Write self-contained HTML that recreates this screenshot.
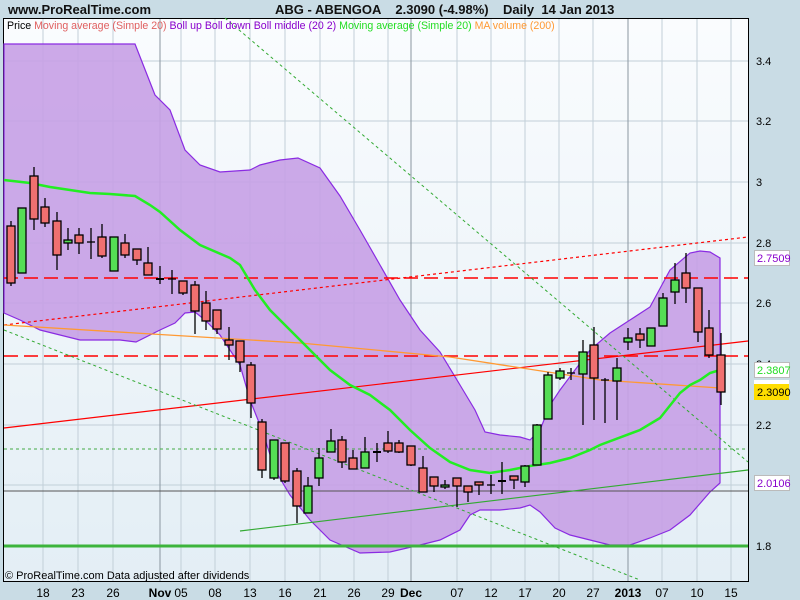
<!DOCTYPE html>
<html><head><meta charset="utf-8"><style>
html,body{margin:0;padding:0;width:800px;height:600px;overflow:hidden;background:#c9dce5;font-family:"Liberation Sans",sans-serif}
</style></head><body>
<svg width="800" height="600" viewBox="0 0 800 600" xmlns="http://www.w3.org/2000/svg" font-family="Liberation Sans, sans-serif">
<defs><linearGradient id="bg" x1="0" y1="0" x2="0" y2="1"><stop offset="0" stop-color="#fafcfe"/><stop offset="1" stop-color="#e3eef5"/></linearGradient></defs>
<rect x="0" y="0" width="800" height="600" fill="#c9dce5"/>
<text x="8" y="14" font-size="13" font-weight="bold" fill="#111">www.ProRealTime.com</text>
<text x="275" y="14" font-size="13" font-weight="bold" fill="#111" xml:space="preserve">ABG - ABENGOA    2.3090 (-4.98%)    Daily  14 Jan 2013</text>
<rect x="3.5" y="18.5" width="745" height="563" fill="url(#bg)" stroke="#000"/>
<g stroke="#c2cfd8" stroke-width="1">
<line x1="4" x2="748" y1="61" y2="61"/><line x1="4" x2="748" y1="121" y2="121"/><line x1="4" x2="748" y1="182" y2="182"/><line x1="4" x2="748" y1="243" y2="243"/><line x1="4" x2="748" y1="303" y2="303"/><line x1="4" x2="748" y1="364" y2="364"/><line x1="4" x2="748" y1="425" y2="425"/><line x1="4" x2="748" y1="485" y2="485"/>
<line x1="43" x2="43" y1="19" y2="581"/><line x1="78" x2="78" y1="19" y2="581"/><line x1="113" x2="113" y1="19" y2="581"/><line x1="181" x2="181" y1="19" y2="581"/><line x1="215" x2="215" y1="19" y2="581"/><line x1="250" x2="250" y1="19" y2="581"/><line x1="285" x2="285" y1="19" y2="581"/><line x1="320" x2="320" y1="19" y2="581"/><line x1="354" x2="354" y1="19" y2="581"/><line x1="388" x2="388" y1="19" y2="581"/><line x1="457" x2="457" y1="19" y2="581"/><line x1="491" x2="491" y1="19" y2="581"/><line x1="525" x2="525" y1="19" y2="581"/><line x1="559" x2="559" y1="19" y2="581"/><line x1="593" x2="593" y1="19" y2="581"/><line x1="662" x2="662" y1="19" y2="581"/><line x1="697" x2="697" y1="19" y2="581"/><line x1="731" x2="731" y1="19" y2="581"/>
</g>
<g stroke="#8a96a0"><line x1="160" x2="160" y1="19" y2="581"/><line x1="411" x2="411" y1="19" y2="581"/><line x1="628" x2="628" y1="19" y2="581"/></g>
<polygon fill="#c6a0e6" fill-opacity="0.9" stroke="#8a2be2" stroke-width="1.2" points="4,44 135,44 155,95 170,110 185,150 200,165 220,172 250,170 260,165 280,160 298,158 320,168 340,196 360,230 380,265 400,300 420,330 440,352 460,385 475,410 485,432 500,435 520,437 530,440 540,430 550,405 560,390 575,370 590,350 610,333 630,320 650,307 670,270 690,253 700,251 710,252 720,258 720,483 710,492 690,515 670,530 650,538 630,545 610,545 590,540 570,535 555,528 540,512 530,505 520,508 500,510 480,510 470,515 460,530 440,540 420,545 390,552 360,553 330,540 310,520 290,495 275,470 262,430 250,400 240,365 220,335 205,320 195,312 185,313 175,323 160,330 136,342 120,340 80,340 40,330 20,320 4,313"/>
<line x1="4" x2="748" y1="278" y2="278" stroke="#ff0000" stroke-width="1.5" stroke-dasharray="14,6"/>
<line x1="4" x2="748" y1="356" y2="356" stroke="#ff0000" stroke-width="1.5" stroke-dasharray="14,6"/>
<line x1="4" x2="748" y1="449" y2="449" stroke="#44aa44" stroke-dasharray="3,3"/>
<line x1="4" x2="748" y1="491" y2="491" stroke="#555"/>
<line x1="4" x2="748" y1="546" y2="546" stroke="#3cb43c" stroke-width="3"/>
<line x1="4" y1="428" x2="748" y2="341" stroke="#ff0000" stroke-width="1.2"/>
<line x1="4" y1="325" x2="748" y2="237" stroke="#ff0000" stroke-width="1.2" stroke-dasharray="3,3"/>
<polyline fill="none" stroke="#ff9933" stroke-width="1.3" points="4,325 300,343 450,357 600,380 720,388"/>
<line x1="240" y1="531" x2="748" y2="470" stroke="#33aa33" stroke-width="1.2"/>
<line x1="4" y1="330" x2="640" y2="580" stroke="#33aa33" stroke-dasharray="3,3"/>
<line x1="225" y1="18" x2="748" y2="462" stroke="#33aa33" stroke-dasharray="3,3"/>
<polyline fill="none" stroke="#22ee22" stroke-width="2.5" points="4,180 30,183 50,187 70,190 90,193 110,194 135,196 150,205 160,212 180,230 200,245 230,258 240,265 255,290 270,310 290,330 310,350 330,370 350,385 370,395 390,410 410,430 430,448 450,462 470,470 490,473 510,470 530,466 550,463 570,458 590,450 600,445 640,430 660,418 680,393 690,385 700,380 710,373 720,370"/>
<g stroke="#000" stroke-width="1.3">
<line x1="11" x2="11" y1="221" y2="286"/><rect x="7" y="226" width="8" height="57" fill="#f07070"/>
<line x1="22" x2="22" y1="208" y2="273"/><rect x="18" y="208" width="8" height="65" fill="#55dd55"/>
<line x1="34" x2="34" y1="167" y2="230"/><rect x="30" y="176" width="8" height="43" fill="#f07070"/>
<line x1="45" x2="45" y1="198" y2="227"/><rect x="41" y="207" width="8" height="16" fill="#f07070"/>
<line x1="57" x2="57" y1="212" y2="270"/><rect x="53" y="221" width="8" height="34" fill="#f07070"/>
<line x1="68" x2="68" y1="228" y2="250"/><rect x="64" y="240" width="8" height="3" fill="#55dd55"/>
<line x1="79" x2="79" y1="228" y2="254"/><rect x="75" y="235" width="8" height="8" fill="#f07070"/>
<line x1="91" x2="91" y1="228" y2="259"/><line x1="87" x2="95" y1="242" y2="242"/>
<line x1="102" x2="102" y1="224" y2="258"/><rect x="98" y="237" width="8" height="19" fill="#f07070"/>
<line x1="114" x2="114" y1="237" y2="271"/><rect x="110" y="237" width="8" height="34" fill="#55dd55"/>
<line x1="125" x2="125" y1="234" y2="258"/><rect x="121" y="243" width="8" height="12" fill="#f07070"/>
<line x1="137" x2="137" y1="249" y2="265"/><rect x="133" y="249" width="8" height="11" fill="#f07070"/>
<line x1="148" x2="148" y1="247" y2="275"/><rect x="144" y="263" width="8" height="12" fill="#f07070"/>
<line x1="160" x2="160" y1="266" y2="284"/><line x1="156" x2="164" y1="279" y2="279" stroke-width="2"/>
<line x1="172" x2="172" y1="270" y2="294"/><line x1="168" x2="176" y1="279" y2="279"/>
<line x1="183" x2="183" y1="281" y2="295"/><rect x="179" y="281" width="8" height="12" fill="#f07070"/>
<line x1="195" x2="195" y1="281" y2="334"/><rect x="191" y="285" width="8" height="26" fill="#f07070"/>
<line x1="206" x2="206" y1="291" y2="330"/><rect x="202" y="303" width="8" height="18" fill="#f07070"/>
<line x1="217" x2="217" y1="310" y2="334"/><rect x="213" y="310" width="8" height="19" fill="#f07070"/>
<line x1="229" x2="229" y1="327" y2="360"/><rect x="225" y="340" width="8" height="5" fill="#f07070"/>
<line x1="240" x2="240" y1="341" y2="372"/><rect x="236" y="341" width="8" height="21" fill="#f07070"/>
<line x1="251" x2="251" y1="362" y2="418"/><rect x="247" y="365" width="8" height="38" fill="#f07070"/>
<line x1="262" x2="262" y1="419" y2="478"/><rect x="258" y="422" width="8" height="48" fill="#f07070"/>
<line x1="274" x2="274" y1="440" y2="480"/><rect x="270" y="440" width="8" height="38" fill="#55dd55"/>
<line x1="285" x2="285" y1="443" y2="483"/><rect x="281" y="443" width="8" height="38" fill="#f07070"/>
<line x1="297" x2="297" y1="468" y2="523"/><rect x="293" y="471" width="8" height="35" fill="#f07070"/>
<line x1="308" x2="308" y1="477" y2="513"/><rect x="304" y="486" width="8" height="27" fill="#55dd55"/>
<line x1="319" x2="319" y1="448" y2="486"/><rect x="315" y="458" width="8" height="20" fill="#55dd55"/>
<line x1="331" x2="331" y1="429" y2="452"/><rect x="327" y="441" width="8" height="11" fill="#55dd55"/>
<line x1="342" x2="342" y1="436" y2="468"/><rect x="338" y="440" width="8" height="22" fill="#f07070"/>
<line x1="353" x2="353" y1="450" y2="469"/><rect x="349" y="458" width="8" height="11" fill="#f07070"/>
<line x1="365" x2="365" y1="437" y2="468"/><rect x="361" y="452" width="8" height="16" fill="#55dd55"/>
<line x1="377" x2="377" y1="443" y2="462"/><line x1="373" x2="381" y1="452" y2="452" stroke-width="2"/>
<line x1="388" x2="388" y1="431" y2="453"/><rect x="384" y="443" width="8" height="8" fill="#f07070"/>
<line x1="399" x2="399" y1="440" y2="453"/><rect x="395" y="443" width="8" height="9" fill="#f07070"/>
<line x1="411" x2="411" y1="446" y2="466"/><rect x="407" y="446" width="8" height="19" fill="#f07070"/>
<line x1="423" x2="423" y1="456" y2="492"/><rect x="419" y="468" width="8" height="24" fill="#f07070"/>
<line x1="434" x2="434" y1="477" y2="492"/><rect x="430" y="477" width="8" height="9" fill="#f07070"/>
<line x1="445" x2="445" y1="480" y2="489"/><rect x="441" y="485" width="8" height="2" fill="#55dd55"/>
<line x1="457" x2="457" y1="478" y2="507"/><rect x="453" y="478" width="8" height="8" fill="#f07070"/>
<line x1="468" x2="468" y1="486" y2="502"/><rect x="464" y="486" width="8" height="6" fill="#f07070"/>
<line x1="479" x2="479" y1="482" y2="495"/><rect x="475" y="482" width="8" height="3" fill="#f07070"/>
<line x1="491" x2="491" y1="475" y2="494"/><line x1="487" x2="495" y1="485" y2="485"/>
<line x1="502" x2="502" y1="462" y2="494"/><line x1="498" x2="506" y1="481" y2="481" stroke-width="2"/>
<line x1="514" x2="514" y1="476" y2="489"/><rect x="510" y="476" width="8" height="4" fill="#f07070"/>
<line x1="525" x2="525" y1="465" y2="487"/><rect x="521" y="466" width="8" height="16" fill="#55dd55"/>
<line x1="537" x2="537" y1="424" y2="465"/><rect x="533" y="425" width="8" height="40" fill="#55dd55"/>
<line x1="548" x2="548" y1="372" y2="419"/><rect x="544" y="375" width="8" height="44" fill="#55dd55"/>
<line x1="560" x2="560" y1="368" y2="380"/><rect x="556" y="371" width="8" height="7" fill="#55dd55"/>
<line x1="571" x2="571" y1="368" y2="380"/><line x1="567" x2="575" y1="373" y2="373"/>
<line x1="583" x2="583" y1="340" y2="425"/><rect x="579" y="352" width="8" height="22" fill="#55dd55"/>
<line x1="594" x2="594" y1="327" y2="420"/><rect x="590" y="345" width="8" height="33" fill="#f07070"/>
<line x1="605" x2="605" y1="378" y2="423"/><line x1="601" x2="609" y1="380" y2="380"/>
<line x1="617" x2="617" y1="358" y2="420"/><rect x="613" y="368" width="8" height="13" fill="#55dd55"/>
<line x1="628" x2="628" y1="328" y2="350"/><rect x="624" y="338" width="8" height="4" fill="#55dd55"/>
<line x1="640" x2="640" y1="328" y2="348"/><rect x="636" y="334" width="8" height="6" fill="#f07070"/>
<line x1="651" x2="651" y1="328" y2="346"/><rect x="647" y="328" width="8" height="18" fill="#55dd55"/>
<line x1="663" x2="663" y1="293" y2="326"/><rect x="659" y="298" width="8" height="28" fill="#55dd55"/>
<line x1="675" x2="675" y1="263" y2="304"/><rect x="671" y="280" width="8" height="12" fill="#55dd55"/>
<line x1="686" x2="686" y1="253" y2="303"/><rect x="682" y="273" width="8" height="15" fill="#f07070"/>
<line x1="698" x2="698" y1="288" y2="342"/><rect x="694" y="288" width="8" height="44" fill="#f07070"/>
<line x1="709" x2="709" y1="310" y2="358"/><rect x="705" y="328" width="8" height="27" fill="#f07070"/>
<line x1="721" x2="721" y1="333" y2="405"/><rect x="717" y="355" width="8" height="37" fill="#f07070"/>
</g>
<text x="7" y="29" font-size="10.6" xml:space="preserve"><tspan fill="#000">Price </tspan><tspan fill="#e06060">Moving average (Simple 20) </tspan><tspan fill="#8800cc">Boll up Boll down Boll middle (20 2) </tspan><tspan fill="#22dd22">Moving average (Simple 20) </tspan><tspan fill="#ff9933">MA volume (200)</tspan></text>
<text x="5" y="579" font-size="11" fill="#000">© ProRealTime.com  Data adjusted after dividends</text>
<g font-size="11" fill="#000">
<text x="756" y="65">3.4</text><text x="756" y="125">3.2</text><text x="756" y="186">3</text><text x="756" y="247">2.8</text><text x="756" y="307">2.6</text><text x="756" y="368">2.4</text><text x="756" y="429">2.2</text><text x="756" y="550">1.8</text>
</g>
<rect x="754.5" y="250.5" width="35" height="15" fill="#fff" stroke="#bbb"/><text x="757" y="262" font-size="11" fill="#8800cc">2.7509</text>
<rect x="754.5" y="362.5" width="35" height="15" fill="#fff" stroke="#bbb"/><text x="757" y="374" font-size="11" fill="#22dd22">2.3807</text>
<rect x="754" y="380" width="35" height="4" fill="#fff"/>
<rect x="754" y="384" width="35" height="16" fill="#ffdd00"/><text x="757" y="396" font-size="11" fill="#000">2.3090</text>
<rect x="754.5" y="475.5" width="35" height="15" fill="#fff" stroke="#bbb"/><text x="757" y="487" font-size="11" fill="#8800cc">2.0106</text>
<g font-size="12" fill="#000" text-anchor="middle">
<text x="43" y="597">18</text><text x="78" y="597">23</text><text x="113" y="597">26</text><text x="160" y="597" font-weight="bold">Nov</text><text x="181" y="597">05</text><text x="215" y="597">08</text><text x="250" y="597">13</text><text x="285" y="597">16</text><text x="320" y="597">21</text><text x="354" y="597">26</text><text x="388" y="597">29</text><text x="411" y="597" font-weight="bold">Dec</text><text x="457" y="597">07</text><text x="491" y="597">12</text><text x="525" y="597">17</text><text x="559" y="597">20</text><text x="593" y="597">27</text><text x="628" y="597" font-weight="bold">2013</text><text x="662" y="597">07</text><text x="697" y="597">10</text><text x="731" y="597">15</text>
</g>
</svg>
</body></html>
